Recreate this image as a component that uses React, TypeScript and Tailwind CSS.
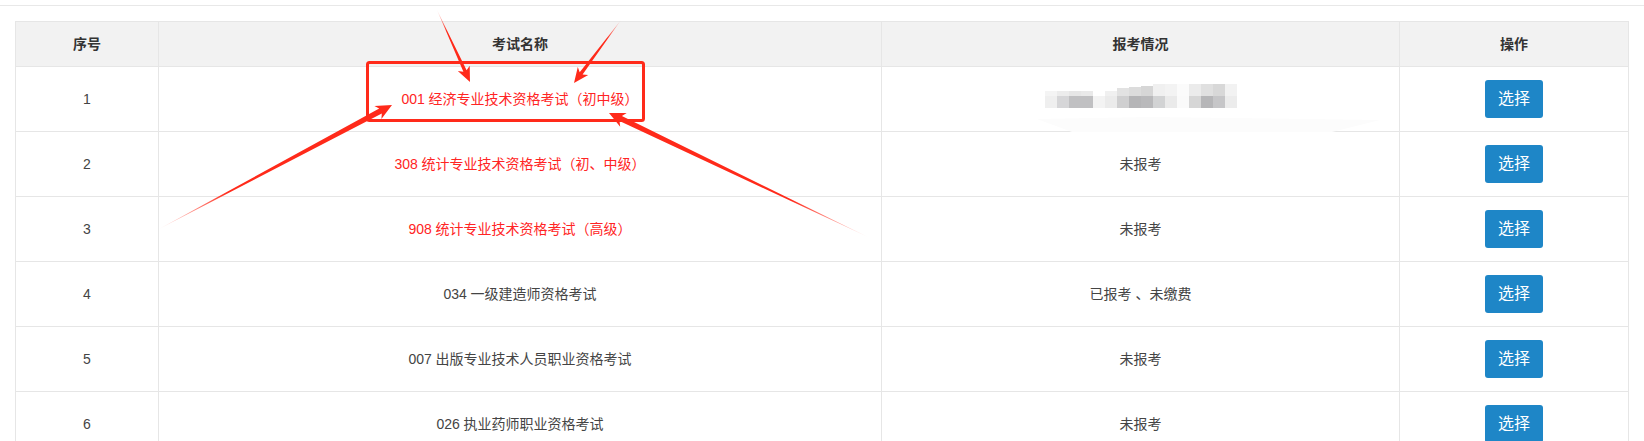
import React from "react";

type Row = { no: number; name: string; red?: boolean; status?: string; blur?: boolean };

const rows: Row[] = [
  { no: 1, name: "001 经济专业技术资格考试（初中级）", red: true, blur: true },
  { no: 2, name: "308 统计专业技术资格考试（初、中级）", red: true, status: "未报考" },
  { no: 3, name: "908 统计专业技术资格考试（高级）", red: true, status: "未报考" },
  { no: 4, name: "034 一级建造师资格考试", status: "已报考 、未缴费" },
  { no: 5, name: "007 出版专业技术人员职业资格考试", status: "未报考" },
  { no: 6, name: "026 执业药师职业资格考试", status: "未报考" },
];

// pixelated (redacted) blocks: [topHeightClass, topColorClass, bottomColorClass]
const blocks: [string, string, string][] = [
  ["h-[5px]", "bg-[#f4f4f4]", "bg-[#efefef]"],
  ["h-[5px]", "bg-[#ececec]", "bg-[#d6d6d8]"],
  ["h-[5px]", "bg-[#e6e6e6]", "bg-[#c0c0c2]"],
  ["h-[5px]", "bg-[#e9e9e9]", "bg-[#c0c0c2]"],
  ["h-[5px]", "bg-[#ffffff]", "bg-[#f3f3f3]"],
  ["h-[5px]", "bg-[#f0f0f0]", "bg-[#ebebeb]"],
  ["h-[8px]", "bg-[#e2e2e2]", "bg-[#cfcfd0]"],
  ["h-[9px]", "bg-[#dcdcdc]", "bg-[#b5b5b7]"],
  ["h-[10px]", "bg-[#d6d6d6]", "bg-[#b9b9bb]"],
  ["h-[12px]", "bg-[#f0f0f0]", "bg-[#d2d3d4]"],
  ["h-[12px]", "bg-[#f3f3f3]", "bg-[#eaeaea]"],
  ["h-[12px]", "bg-[#fbfbfb]", "bg-[#fafafa]"],
  ["h-[12px]", "bg-[#ebebeb]", "bg-[#d6d6d6]"],
  ["h-[12px]", "bg-[#e0e0e0]", "bg-[#b6b6b8]"],
  ["h-[12px]", "bg-[#d8d8d8]", "bg-[#c6c6c8]"],
  ["h-[12px]", "bg-[#f2f2f2]", "bg-[#ececec]"],
];

function arrowPoints(tx: number, ty: number, px: number, py: number, L: number, W: number, w: number) {
  const dx = px - tx;
  const dy = py - ty;
  const len = Math.hypot(dx, dy);
  const ux = dx / len;
  const uy = dy / len;
  const nx = -uy;
  const ny = ux;
  const bx = px - ux * L;
  const by = py - uy * L;
  const nbx = px - ux * (L - 3);
  const nby = py - uy * (L - 3);
  const pts = [
    [tx, ty],
    [nbx + nx * w, nby + ny * w],
    [bx + nx * W, by + ny * W],
    [px, py],
    [bx - nx * W, by - ny * W],
    [nbx - nx * w, nby - ny * w],
  ];
  return pts.map((p) => `${p[0].toFixed(1)},${p[1].toFixed(1)}`).join(" ");
}

const arrows = [
  { id: "a", t: [437, 10], p: [470, 82], L: 15, W: 6.5, w: 1.8 },
  { id: "b", t: [621, 20], p: [574, 83], L: 15, W: 6.5, w: 1.8 },
  { id: "c", t: [159, 229], p: [392, 105], L: 16, W: 7.5, w: 2.8 },
  { id: "d", t: [868, 237], p: [609, 113], L: 16, W: 7.5, w: 2.8 },
];

function Overlay() {
  return (
    <svg
      className="pointer-events-none absolute left-0 top-0"
      width={1644}
      height={441}
      viewBox="0 0 1644 441"
    >
      <defs>
        {arrows.map((a) => (
          <linearGradient
            key={a.id}
            id={`g-${a.id}`}
            gradientUnits="userSpaceOnUse"
            x1={a.t[0]}
            y1={a.t[1]}
            x2={a.p[0]}
            y2={a.p[1]}
          >
            <stop offset="0" stopColor="#ff2a1a" stopOpacity="0.1" />
            <stop offset="0.3" stopColor="#ff2a1a" stopOpacity="1" />
            <stop offset="1" stopColor="#ff2a1a" stopOpacity="1" />
          </linearGradient>
        ))}
      </defs>
      <polygon points="1037,119 1150,117 1380,120 1332,132 1072,132" fill="#fcfcfc" />
      <rect x={367.5} y={62.5} width={276} height={58} rx={2} fill="none" stroke="#ff2a1a" strokeWidth={3} />
      {arrows.map((a) => (
        <polygon
          key={a.id}
          points={arrowPoints(a.t[0], a.t[1], a.p[0], a.p[1], a.L, a.W, a.w)}
          fill={`url(#g-${a.id})`}
        />
      ))}
    </svg>
  );
}

function Blur() {
  return (
    <div className="flex -translate-y-[3px] items-end">
      {blocks.map((b, i) => (
        <div key={i} className="flex h-[24px] w-[12px] flex-col justify-end">
          <div className={`${b[0]} w-[12px] ${b[1]}`} />
          <div className={`h-[12px] w-[12px] ${b[2]}`} />
        </div>
      ))}
    </div>
  );
}

export default function App() {
  const font = "font-[Liberation_Sans,Noto_Sans_CJK_SC,sans-serif]";
  return (
    <div className={`relative min-h-screen w-[1644px] bg-white ${font}`}>
      <div className="h-[5px]" />
      <div className="h-px bg-[#e8e8e8]" />
      <div className="ml-[15px] mt-[15px] w-[1614px] border-l border-t border-[#e6e6e6]">
        <div className="grid grid-cols-[143px_723px_518px_229px] bg-[#f2f2f2] text-[14px] font-bold text-[#333]">
          {["序号", "考试名称", "报考情况", "操作"].map((h) => (
            <div key={h} className="flex h-[45px] items-center justify-center border-b border-r border-[#e6e6e6]">
              {h}
            </div>
          ))}
        </div>
        {rows.map((r) => (
          <div key={r.no} className="grid grid-cols-[143px_723px_518px_229px] text-[14px] text-[#444]">
            <div className="flex h-[65px] items-center justify-center border-b border-r border-[#e6e6e6]">
              {r.no}
            </div>
            <div
              className={`flex h-[65px] items-center justify-center border-b border-r border-[#e6e6e6] ${
                r.red ? "text-[#ff2424]" : ""
              }`}
            >
              {r.name}
            </div>
            <div className="flex h-[65px] items-center justify-center border-b border-r border-[#e6e6e6]">
              {r.blur ? <Blur /> : r.status}
            </div>
            <div className="flex h-[65px] items-center justify-center border-b border-r border-[#e6e6e6]">
              <button className="h-[38px] w-[58px] rounded-[3px] bg-[#1e86c7] text-[16px] text-white">选择</button>
            </div>
          </div>
        ))}
      </div>
      <Overlay />
    </div>
  );
}
